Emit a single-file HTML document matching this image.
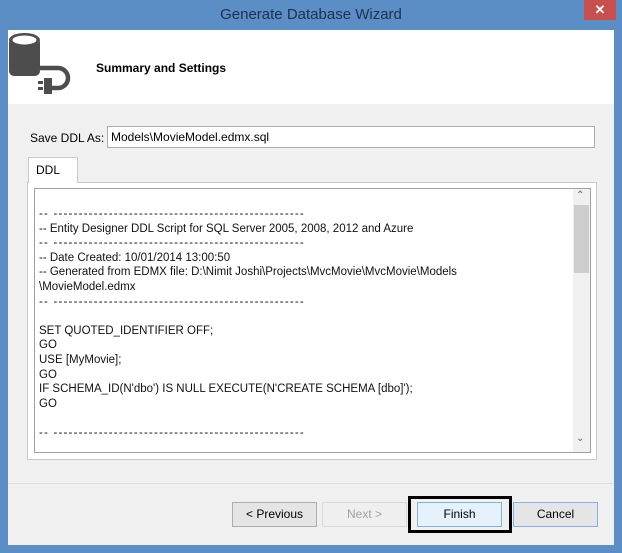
<!DOCTYPE html><html><head><style>
*{margin:0;padding:0;box-sizing:border-box}
body{width:622px;height:553px;background:#5a8ec4;position:relative;overflow:hidden;font-family:"Liberation Sans",sans-serif;font-size:12px;color:#000}
.a{position:absolute}
.title{left:0;top:0;width:622px;height:30px;text-align:center;line-height:30px;font-size:15px;color:#1e3050}
.close{left:584px;top:0;width:32px;height:20px;background:#c7504f;color:#fff;text-align:center;line-height:20px;font-size:13px;font-weight:bold}
.win{left:8px;top:30px;width:606px;height:515px;background:#f0f0f0}
.head{left:8px;top:30px;width:606px;height:74px;background:#fff}
.btn{height:25px;border:1px solid #adadad;background:#e5e5e5;text-align:center;line-height:23px}
.code{left:39px;top:207px;line-height:14.6px;font-size:11.5px;white-space:pre;color:#111}
.d{letter-spacing:1.2px}
</style></head><body>
<div class="a title">Generate Database Wizard</div>
<div class="a close">✕</div>
<div class="a win"></div>
<div class="a head"></div>
<svg class="a" style="left:8px;top:32px" width="66" height="62" viewBox="0 0 66 62">
<rect x="1" y="6" width="31" height="38" rx="5" fill="#4d4d4d"/>
<ellipse cx="16.5" cy="8" rx="15.5" ry="7" fill="#4d4d4d"/>
<ellipse cx="16.5" cy="8" rx="12" ry="4.5" fill="#fff"/>
<path d="M32 36 H50 A10 10 0 0 1 50 56 H44" stroke="#4d4d4d" stroke-width="4.5" fill="none"/>
<rect x="36" y="46" width="8" height="16" fill="#4d4d4d"/><rect x="30" y="49" width="5" height="3" fill="#4d4d4d"/><rect x="30" y="55" width="5" height="3" fill="#4d4d4d"/>
</svg>
<div class="a" style="left:96px;top:61px;font-weight:bold;font-size:12px">Summary and Settings</div>
<div class="a" style="left:30px;top:131px">Save DDL As:</div>
<div class="a" style="left:107px;top:126px;width:488px;height:22px;background:#fff;border:1px solid #abadb3;padding:3px 3px;font-size:12px">Models\MovieModel.edmx.sql</div>
<div class="a" style="left:27px;top:182px;width:570px;height:278px;border:1px solid #c9c9c9;background:#fff"></div>
<div class="a" style="left:28px;top:157px;width:50px;height:26px;border:1px solid #c9c9c9;border-bottom:none;background:#fff;padding:5px 0 0 7px">DDL</div>
<div class="a" style="left:34px;top:188px;width:557px;height:265px;border:1px solid #a0a0a0;background:#fff"></div>
<div class="a" style="left:573px;top:189px;width:17px;height:263px;background:#f0f0f0"></div>
<div class="a" style="left:574px;top:205px;width:15px;height:68px;background:#cdcdcd"></div>
<div class="a" style="left:576px;top:190px;font-size:10px;color:#606060">&#8963;</div>
<div class="a" style="left:576px;top:433px;font-size:10px;color:#606060">&#8964;</div>
<div class="a code"><span class="d">-- --------------------------------------------------</span>
-- Entity Designer DDL Script for SQL Server 2005, 2008, 2012 and Azure
<span class="d">-- --------------------------------------------------</span>
-- Date Created: 10/01/2014 13:00:50
-- Generated from EDMX file: D:\Nimit Joshi\Projects\MvcMovie\MvcMovie\Models
\MovieModel.edmx
<span class="d">-- --------------------------------------------------</span>

SET QUOTED_IDENTIFIER OFF;
GO
USE [MyMovie];
GO
IF SCHEMA_ID(N'dbo') IS NULL EXECUTE(N'CREATE SCHEMA [dbo]');
GO

<span class="d">-- --------------------------------------------------</span></div>
<div class="a" style="left:8px;top:483px;width:606px;height:1px;background:#dcdcdc"></div>
<div class="a btn" style="left:232px;top:502px;width:85px">&lt; Previous</div>
<div class="a btn" style="left:322px;top:502px;width:85px;color:#a0a0a0;border-color:#d9d9d9;background:#efefef">Next &gt;</div>
<div class="a" style="left:408px;top:496px;width:104px;height:37px;border:3px solid #000"></div>
<div class="a btn" style="left:417px;top:502px;width:85px;border-color:#7eb4ea;background:#e5f1fb">Finish</div>
<div class="a btn" style="left:513px;top:502px;width:85px;border-color:#7eb4ea">Cancel</div>
</body></html>
